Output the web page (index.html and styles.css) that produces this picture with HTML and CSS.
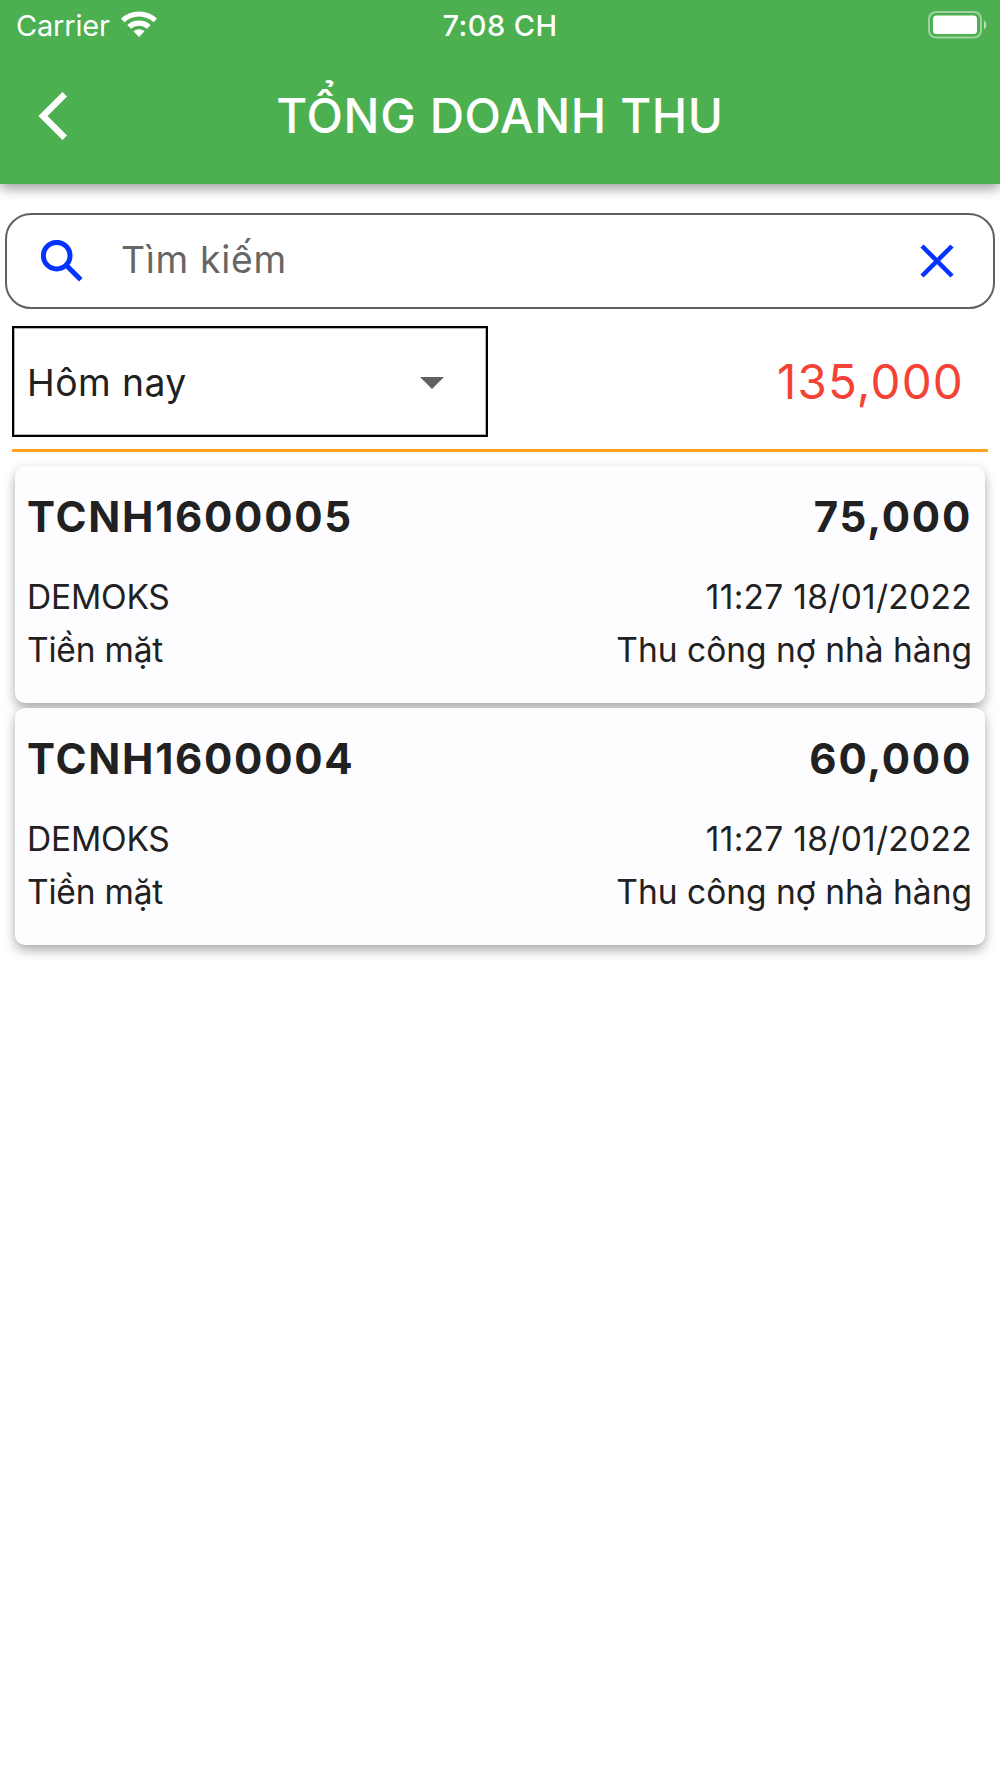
FILE: index.html
```html
<!DOCTYPE html>
<html lang="vi">
	<head>
		<meta charset="UTF-8" />
		<meta name="viewport" content="width=device-width, initial-scale=1.0" />
		<title>Tổng doanh thu</title>
		<link rel="stylesheet" href="styles.css">
	</head>
	<body>
		<header class="header">
			<div class="status">
				<div class="carrier">
					<span>Carrier</span>
					<svg class="wifi" viewBox="0 0 38 28">
						<path d="M1 8.700A26 26 0 0 1 37 8.700L33.500 12.300A21 21 0 0 0 4.500 12.300Z" />
						<path d="M7.300 15A17.500 17.500 0 0 1 30.700 15L27 18.700A12 12 0 0 0 11 18.700Z" />
						<path d="M13.500 21.300A8.500 8.500 0 0 1 24.500 21.300L19 27Z" />
					</svg>
				</div>
				<span class="time">7:08 CH</span>
				<svg class="battery" viewBox="0 0 60 28">
					<rect x="1" y="1" width="52" height="25.500" rx="7" fill="none" stroke="#fff" stroke-opacity=".45" stroke-width="2" />
					<rect x="5" y="4.500" width="44" height="18.500" rx="3.500" />
					<path d="M56 9.500A5.500 5.500 0 0 1 56 18.500Z" fill-opacity=".6" />
				</svg>
			</div>
			<div class="bar">
				<svg class="back" viewBox="0 0 30 48"><path d="M26.800 2.300L5 24L26.800 45.700" /></svg>
				<h1 class="title">TỔNG DOANH THU</h1>
			</div>
		</header>
		<main class="content">
			<div class="search">
				<svg class="search-icon" viewBox="0 0 42 42"><circle cx="15.700" cy="15.700" r="13.300" /><path d="M25.500 25.500L39.800 39.800" /></svg>
				<span class="hint">Tìm kiếm</span>
				<svg class="clear" viewBox="0 0 34 34"><path d="M2 2L32 32M32 2L2 32" /></svg>
			</div>
			<div class="filter">
				<div class="dropdown">
					<span class="period">Hôm nay</span>
					<svg class="arrow" viewBox="0 0 24 12"><path d="M0 0H24L12 12Z" /></svg>
				</div>
				<span class="total">135,000</span>
			</div>
			<div class="list">
				<article class="card">
					<div class="row top"><span>TCNH1600005</span><span>75,000</span></div>
					<div class="row"><span class="place">DEMOKS</span><span class="date">11:27 18/01/2022</span></div>
					<div class="row"><span class="method">Tiền mặt</span><span>Thu công nợ nhà hàng</span></div>
				</article>
				<article class="card">
					<div class="row top"><span>TCNH1600004</span><span>60,000</span></div>
					<div class="row"><span class="place">DEMOKS</span><span class="date">11:27 18/01/2022</span></div>
					<div class="row"><span class="method">Tiền mặt</span><span>Thu công nợ nhà hàng</span></div>
				</article>
			</div>
		</main>
	</body>
</html>
```
FILE: styles.css
```css
* {
	box-sizing: border-box;
}
body {
	margin: 0;
	min-height: 1778px;
	background: #fff;
	color: #212121;
	font-family: Inter, Roboto, sans-serif;
	font-size: 33.5px;
}
svg {
	display: block;
	flex: none;
}
.header {
	height: 184px;
	background: #4caf50;
	color: #fff;
	box-shadow: 0 5px 11px rgba(0, 0, 0, 0.36);
}
.status {
	display: grid;
	grid-template-columns: 1fr auto 1fr;
	align-items: center;
	height: 50px;
	padding: 0 12px;
	font-size: 29px;
}
.carrier {
	display: flex;
	align-items: center;
	gap: 10px;
	padding-left: 4px;
	letter-spacing: -0.2px;
}
.wifi {
	width: 38px;
	height: 28px;
	margin-top: -2px;
	fill: #fff;
}
.time {
	font-weight: 500;
	letter-spacing: 0.45px;
}
.battery {
	justify-self: end;
	width: 60px;
	height: 28px;
	margin-top: -1px;
	fill: #fff;
}
.bar {
	display: grid;
	grid-template-columns: 1fr auto 1fr;
	align-items: center;
	height: 132px;
	padding: 0 38px;
}
.back {
	width: 30px;
	height: 48px;
	fill: none;
	stroke: #fff;
	stroke-width: 6.5;
}
.title {
	margin: 0;
	padding-bottom: 1px;
	font-size: 47.5px;
	font-weight: 500;
	letter-spacing: 0.65px;
}
.content {
	padding-top: 29px;
}
.search {
	display: flex;
	align-items: center;
	height: 96px;
	margin: 0 5px;
	padding: 0 39px 0 34px;
	border: 2px solid #616161;
	border-radius: 26px;
}
.search-icon {
	width: 42px;
	height: 42px;
	margin-top: -1px;
	fill: none;
	stroke: #0433ff;
	stroke-width: 5;
}
.hint {
	margin-right: auto;
	margin-left: 38px;
	padding-bottom: 4px;
	color: #666;
	font-size: 37.3px;
	letter-spacing: 0.7px;
}
.clear {
	width: 34px;
	height: 34px;
	stroke: #0433ff;
	stroke-width: 4.5;
}
.filter {
	display: flex;
	align-items: center;
	justify-content: space-between;
	margin: 0 12px;
	padding: 17px 0 12px;
	border-bottom: 3px solid #ffa21c;
}
.dropdown {
	display: flex;
	align-items: center;
	justify-content: space-between;
	width: 476px;
	height: 111px;
	padding: 2px 42px 0 13px;
	border: 2px solid #000;
	box-shadow: inset 0 0 0 1px rgba(0, 0, 0, 0.3);
	font-size: 37.3px;
	letter-spacing: 0.45px;
}
.arrow {
	width: 24px;
	height: 12px;
	fill: #616161;
}
.total {
	margin-right: 24px;
	color: #f44336;
	font-size: 47.5px;
	letter-spacing: 1.2px;
}
.list {
	display: flex;
	flex-direction: column;
	gap: 5px;
	margin: 14px 15px 0;
}
.card {
	height: 237px;
	padding: 17px 13px 0 12px;
	border-radius: 10px;
	background: #fdfdff;
	box-shadow: 0 5px 12px rgba(0, 0, 0, 0.34);
}
.row {
	display: flex;
	align-items: center;
	justify-content: space-between;
	height: 53px;
}
.top {
	height: 66px;
	margin-bottom: 21px;
	font-size: 42px;
	font-weight: 700;
	letter-spacing: 1.75px;
}
.place,
.method {
	letter-spacing: -0.2px;
}
.date {
	letter-spacing: 0.3px;
}
```
